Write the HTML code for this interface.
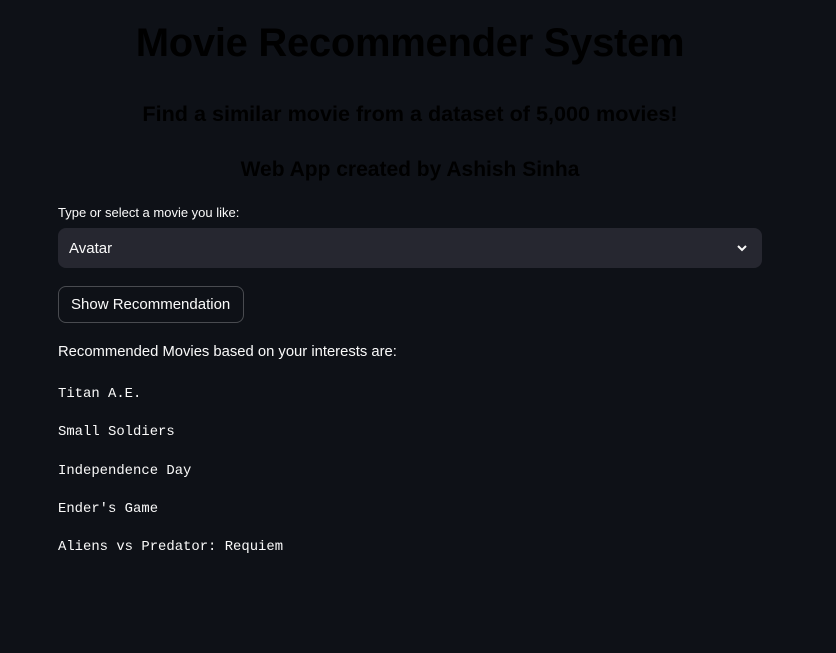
<!DOCTYPE html>
<html><head><meta charset="utf-8"><style>
html,body{margin:0;padding:0;background:#0e1117;width:836px;height:653px;overflow:hidden;font-family:"Liberation Sans",sans-serif;color:#fafafa}
.c{position:absolute;left:0;width:820px;text-align:center;color:#000;font-weight:bold;white-space:nowrap}
.t{position:absolute;white-space:nowrap}
.m{font-family:"Liberation Mono",monospace;font-size:13.9px;left:58px}
</style></head><body>
<div class="c" style="top:21px;font-size:40px;letter-spacing:-0.3px">Movie Recommender System</div>
<div class="c" style="top:101px;font-size:21.6px">Find a similar movie from a dataset of 5,000 movies!</div>
<div class="c" style="top:158px;font-size:21px">Web App created by Ashish Sinha</div>
<div class="t" style="left:58px;top:205px;font-size:13px">Type or select a movie you like:</div>
<div style="position:absolute;left:58px;top:228px;width:704px;height:40px;background:#262730;border-radius:8px">
<div class="t" style="left:11px;top:12px;font-size:15px">Avatar</div>
<svg style="position:absolute;right:14px;top:14px" width="12" height="12" viewBox="0 0 12 12"><path d="M2 4 L6 8 L10 4" stroke="#fafafa" stroke-width="2" fill="none"/></svg>
</div>
<div style="position:absolute;left:58px;top:286px;width:186px;height:37px;border:1px solid rgba(250,250,250,0.25);border-radius:8px;box-sizing:border-box"></div>
<div class="t" style="left:71px;top:296px;font-size:15px">Show Recommendation</div>
<div class="t" style="left:58px;top:344px;font-size:14.8px">Recommended Movies based on your interests are:</div>
<div class="t m" style="top:386px">Titan A.E.</div>
<div class="t m" style="top:424px">Small Soldiers</div>
<div class="t m" style="top:463px">Independence Day</div>
<div class="t m" style="top:501px">Ender's Game</div>
<div class="t m" style="top:539px">Aliens vs Predator: Requiem</div>
</body></html>
